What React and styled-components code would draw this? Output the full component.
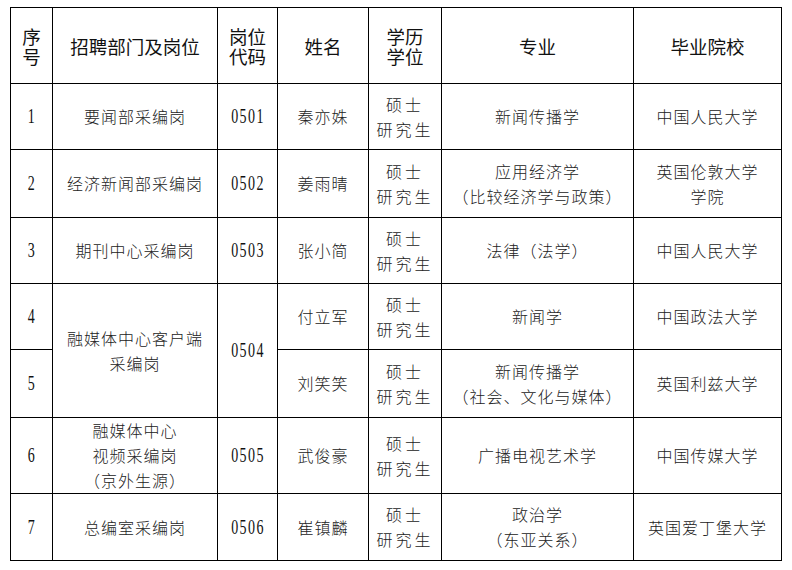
import React from "react";
import styled, { createGlobalStyle } from "styled-components";

const Global = createGlobalStyle`
  html, body { margin: 0; padding: 0; background: #fff; }
  body { font-family: "Noto Sans CJK SC", "Noto Sans", sans-serif; }
`;

const Page = styled.div`
  padding: 7px 0 0 10px;
`;

const Table = styled.table`
  border-collapse: collapse;
  table-layout: fixed;
  width: 772px;
`;

const Col = styled.col`
  width: ${(p) => p.$w}px;
`;

const HeadRow = styled.tr`
  height: 76px;
`;

const Row = styled.tr`
  height: ${(p) => p.$h}px;
`;

const Th = styled.th`
  border: 1.5px solid #000;
  padding: 0;
  font-family: "Noto Sans CJK SC", sans-serif;
  font-weight: 400;
  font-size: 18.5px;
  line-height: 20px;
  color: #111;
  text-align: center;
  vertical-align: middle;
`;

const Td = styled.td`
  border: 1.5px solid #000;
  padding: 0;
  font-family: "Noto Sans CJK SC", sans-serif;
  font-weight: 300;
  font-size: 16px;
  line-height: 25px;
  letter-spacing: 1px;
  color: #222;
  text-align: center;
  vertical-align: middle;
`;

const Num = styled.span`
  display: inline-block;
  font-family: "Liberation Serif", serif;
  font-size: 20px;
  letter-spacing: 2px;
  transform: scaleX(0.7);
  color: #111;
`;

const Line = styled.div`
  white-space: nowrap;
  letter-spacing: ${(p) => p.$ls || 1}px;
`;

const cols = [42, 165, 60, 91, 73, 192, 148];

const Multi = ({ lines, ls }) =>
  lines.map((l, i) => (
    <Line key={i} $ls={ls}>
      {l}
    </Line>
  ));

const Degree = () => <Multi lines={["硕士", "研究生"]} ls={3} />;

export default function App() {
  return (
    <>
      <Global />
      <Page>
        <Table>
          <colgroup>
            {cols.map((w, i) => (
              <Col key={i} $w={w} />
            ))}
          </colgroup>
          <thead>
            <HeadRow>
              <Th><div>序</div><div>号</div></Th>
              <Th>招聘部门及岗位</Th>
              <Th><div>岗位</div><div>代码</div></Th>
              <Th>姓名</Th>
              <Th><div>学历</div><div>学位</div></Th>
              <Th>专业</Th>
              <Th>毕业院校</Th>
            </HeadRow>
          </thead>
          <tbody>
            <Row $h={66}>
              <Td><Num>1</Num></Td>
              <Td>要闻部采编岗</Td>
              <Td><Num>0501</Num></Td>
              <Td>秦亦姝</Td>
              <Td><Degree /></Td>
              <Td>新闻传播学</Td>
              <Td>中国人民大学</Td>
            </Row>
            <Row $h={68}>
              <Td><Num>2</Num></Td>
              <Td>经济新闻部采编岗</Td>
              <Td><Num>0502</Num></Td>
              <Td>姜雨晴</Td>
              <Td><Degree /></Td>
              <Td><Multi lines={["应用经济学", "（比较经济学与政策）"]} /></Td>
              <Td><Multi lines={["英国伦敦大学", "学院"]} /></Td>
            </Row>
            <Row $h={66}>
              <Td><Num>3</Num></Td>
              <Td>期刊中心采编岗</Td>
              <Td><Num>0503</Num></Td>
              <Td>张小简</Td>
              <Td><Degree /></Td>
              <Td>法律（法学）</Td>
              <Td>中国人民大学</Td>
            </Row>
            <Row $h={66}>
              <Td><Num>4</Num></Td>
              <Td rowSpan={2}><Multi lines={["融媒体中心客户端", "采编岗"]} /></Td>
              <Td rowSpan={2}><Num>0504</Num></Td>
              <Td>付立军</Td>
              <Td><Degree /></Td>
              <Td>新闻学</Td>
              <Td>中国政法大学</Td>
            </Row>
            <Row $h={68}>
              <Td><Num>5</Num></Td>
              <Td>刘笑笑</Td>
              <Td><Degree /></Td>
              <Td><Multi lines={["新闻传播学", "（社会、文化与媒体）"]} /></Td>
              <Td>英国利兹大学</Td>
            </Row>
            <Row $h={76}>
              <Td><Num>6</Num></Td>
              <Td><Multi lines={["融媒体中心", "视频采编岗", "（京外生源）"]} /></Td>
              <Td><Num>0505</Num></Td>
              <Td>武俊豪</Td>
              <Td><Degree /></Td>
              <Td>广播电视艺术学</Td>
              <Td>中国传媒大学</Td>
            </Row>
            <Row $h={67}>
              <Td><Num>7</Num></Td>
              <Td>总编室采编岗</Td>
              <Td><Num>0506</Num></Td>
              <Td>崔镇麟</Td>
              <Td><Degree /></Td>
              <Td><Multi lines={["政治学", "（东亚关系）"]} /></Td>
              <Td>英国爱丁堡大学</Td>
            </Row>
          </tbody>
        </Table>
      </Page>
    </>
  );
}
